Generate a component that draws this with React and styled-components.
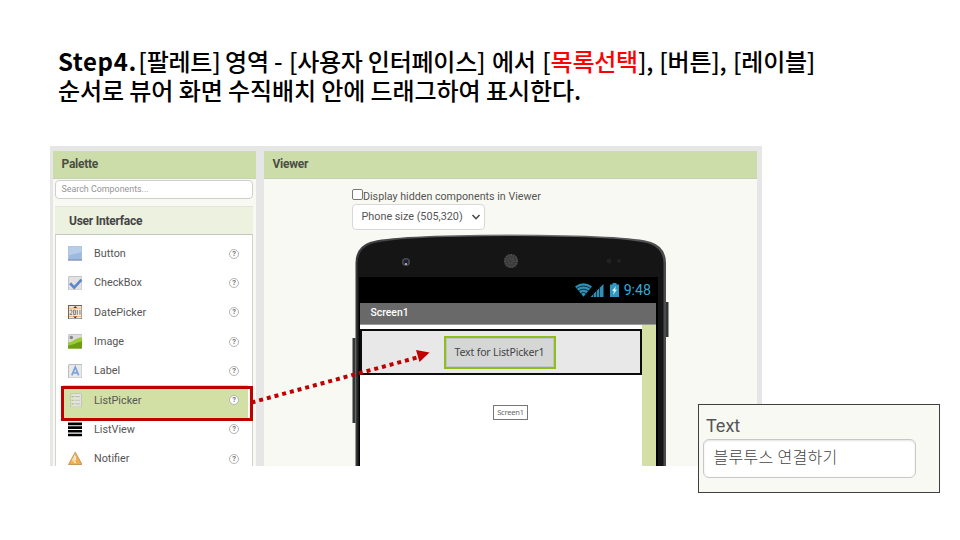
import React from "react";
import styled, { createGlobalStyle } from "styled-components";

const Global = createGlobalStyle`
  * { box-sizing: border-box; }
  body { margin: 0; background: #fff; font-family: Roboto, "Liberation Sans", sans-serif; }
`;

const Slide = styled.main`
  position: relative;
  width: 960px;
  height: 540px;
  overflow: hidden;
  background: #fff;
`;

const Heading = styled.h1`
  margin: 0;
  height: 146px;
  padding: 46px 0 0 58px;
  font: 500 24px/29px "Noto Sans CJK KR", sans-serif;
  color: #000;
  white-space: nowrap;
`;

const HeadLine = styled.div`
  height: 29px;
  letter-spacing: ${(p) => p.$spacing || 0}px;
`;

const Step = styled.b`
  font-weight: 700;
  letter-spacing: 0.6px;
`;

const Word = styled.span`
  margin-left: ${(p) => p.$shift || 0}px;
`;

const Accent = styled.span`
  color: #f00;
`;

const Designer = styled.section`
  display: flex;
  gap: 8px;
  width: 712px;
  height: 320px;
  margin-left: 50px;
  padding: 5px 5px 0 3px;
  background: #e6e6e6;
  overflow: hidden;
`;

const Panel = styled.div`
  width: ${(p) => p.$width}px;
  height: 315px;
  background: #f8f9f3;
  overflow: hidden;
`;

const PanelTitle = styled.div`
  height: 28px;
  padding-left: 8.5px;
  border-bottom: 1px solid #c9cebd;
  background: #cddda9;
  color: #4b4e45;
  font: 700 12px/27px Roboto, sans-serif;
  letter-spacing: -0.25px;
`;

const Search = styled.div`
  width: 198px;
  height: 19px;
  margin: 1px 0 0 2px;
  padding-left: 5.5px;
  border: 1px solid #cfcfcf;
  border-radius: 4px;
  background: #fff;
  color: #959595;
  font: 400 8.9px/17px Roboto, sans-serif;
`;

const Group = styled.div`
  width: 198px;
  height: 29px;
  margin: 7px 0 0 2px;
  padding-left: 14px;
  border-top: 1px solid #e4e6dc;
  border-bottom: 1px solid #c4c6c0;
  background: #edf1e0;
  color: #444;
  font: 700 12px/28px Roboto, sans-serif;
  letter-spacing: -0.25px;
`;

const List = styled.div`
  width: 198px;
  height: 240px;
  margin-left: 2px;
  padding-top: 4px;
  border: solid #d3d4d0;
  border-width: 0 1px;
  background: #fff;
`;

const Item = styled.div`
  display: flex;
  align-items: center;
  height: 29.3px;
  margin: 0 4px 0 7px;
  padding-left: 4.5px;
  background: ${(p) => (p.$active ? "#d2e0a6" : "transparent")};
  box-shadow: ${(p) => (p.$active ? "0 3px 0 #d2e0a6" : "none")};
  color: #555;
  font: 400 10.8px/29px Roboto, sans-serif;
`;

const ItemName = styled.span`
  flex: 1;
  margin-left: 12px;
`;

const Help = styled.span`
  width: 10px;
  height: 10px;
  margin-right: 9px;
  border: 1px solid #b4b4b4;
  border-radius: 50%;
  background: #fff;
  color: #777;
  font: 700 7.5px/8px Roboto, sans-serif;
  text-align: center;
`;

const Selection = styled.div`
  position: absolute;
  left: 61px;
  top: 386px;
  width: 192px;
  height: 35px;
  border: 3px solid #c00000;
`;

const Options = styled.div`
  padding-left: 88px;
  height: 55px;
  padding-top: 9px;
`;

const CheckRow = styled.div`
  display: flex;
  height: 15.5px;
  color: #555;
  font: 400 10.7px/17px Roboto, sans-serif;
  white-space: nowrap;
`;

const Box = styled.span`
  width: 11px;
  height: 11px;
  margin-top: 1px;
  border: 1px solid #777;
  border-radius: 2px;
  background: #fff;
`;

const SizeSelect = styled.div`
  display: flex;
  align-items: center;
  justify-content: space-between;
  width: 133px;
  height: 26px;
  padding: 0 3px 0 8.5px;
  border: 1px solid #d8d8d8;
  border-radius: 4px;
  background: #fff;
  color: #555;
  font: 400 10.8px/24px Roboto, sans-serif;
`;

const Phone = styled.div`
  position: relative;
  width: 316px;
  height: 232px;
  margin-left: 88px;
`;

const PhoneArt = styled.svg`
  position: absolute;
  left: 0;
  top: 0;
`;

const Display = styled.div`
  position: relative;
  width: 296px;
  margin-left: 8px;
  padding-top: 43px;
`;

const StatusBar = styled.div`
  display: flex;
  justify-content: flex-end;
  align-items: center;
  height: 26px;
  padding-right: 5px;
  color: #35a8d3;
  font: 400 14.2px/26px Roboto, sans-serif;
`;

const StatusIcons = styled.svg`
  margin-right: 4px;
`;

const AppTitle = styled.div`
  height: 22px;
  padding-left: 10.5px;
  border-bottom: 1px solid #9a9a9a;
  background: #696969;
  color: #fff;
  font: 500 10.4px/20px Roboto, sans-serif;
`;

const Canvas = styled.div`
  height: 142px;
  padding-top: 4px;
  border-right: 14px solid #d2e0a6;
  background: #fff;
`;

const Arrangement = styled.div`
  display: flex;
  justify-content: center;
  width: 282px;
  height: 46px;
  padding-top: 5px;
  padding-right: 3px;
  border: 2px solid #0b0b0b;
  background: #e8e8e8;
`;

const PickerButton = styled.div`
  width: 112px;
  height: 33px;
  border: 2px solid #8fbe1c;
  background: #d5d7d7;
  box-shadow: inset 0 0 0 1px #c2c4ca;
  color: #444;
  font: 400 10.6px/29px "Noto Sans", sans-serif;
  letter-spacing: -0.2px;
  text-align: center;
  white-space: nowrap;
`;

const ScreenTag = styled.div`
  width: 35px;
  height: 15px;
  margin: 30px 0 0 133px;
  border: 1px solid #777;
  background: #fff;
  color: #666;
  font: 400 7.5px/13px "Noto Sans", sans-serif;
  letter-spacing: -0.2px;
  text-align: center;
`;

const Arrow = styled.svg`
  position: absolute;
  left: 250px;
  top: 340px;
`;

const Property = styled.aside`
  position: absolute;
  left: 698px;
  top: 404px;
  width: 242px;
  height: 89px;
  padding: 9px 0 0 4px;
  border: 1px solid #3f3f3f;
  background: #f8f9f3;
`;

const PropertyLabel = styled.div`
  height: 25px;
  padding-left: 3px;
  color: #555;
  font: 400 18px/24px Roboto, sans-serif;
`;

const PropertyField = styled.div`
  width: 213px;
  height: 39px;
  padding-left: 9.5px;
  border: 1px solid #c8c8c8;
  border-radius: 6px;
  background: #fff;
  box-shadow: inset 0 1px 2px #e4e4e4;
  color: #444;
  font: 300 16px/33px "Noto Sans CJK KR", sans-serif;
  letter-spacing: 0.3px;
`;

const drawings = {
  Button: (
    <>
      <rect x=".5" y=".5" width="13" height="13" fill="#9eb9df" stroke="#b6c4da" />
      <path d="M1 1h12v5L1 9z" fill="#b8cdea" />
      <path d="M0 13.5h14" stroke="#7587a8" />
    </>
  ),
  CheckBox: (
    <>
      <rect x=".5" y=".5" width="13" height="13" rx="1" fill="#e2e2e2" stroke="#c5c5c5" />
      <path d="M2 7l4 4.2L13 3.5" fill="none" stroke="#5c88cb" strokeWidth="2.6" />
    </>
  ),
  DatePicker: (
    <>
      <rect x=".5" y=".5" width="13" height="13" fill="#f1e9df" stroke="#666" />
      <path d="M1 3.2h12M1 11.2h12" stroke="#f3b676" />
      <path d="M7 1l2 2H5zM7 13l2-2H5z" fill="#444" />
      <path d="M1.8 5h2v2l-2 2.2h2.3M5.4 5h1.8v4.2H5.4zM9 4.8v4.6M11.5 4.8v4.6" fill="none" stroke="#777" strokeWidth=".9" />
    </>
  ),
  Image: (
    <>
      <rect x=".5" y=".5" width="13" height="13" rx="1" fill="#dcdcdc" stroke="#c6c6c6" />
      <circle cx="3.2" cy="3.4" r="1.7" fill="#888" />
      <path d="M0 8c5 0 6-4 14-5v11H0z" fill="#9bcc38" />
      <path d="M0 11c6 0 8-3 14-4v7H0z" fill="#6d9e10" />
    </>
  ),
  Label: (
    <>
      <rect x=".5" y=".5" width="13" height="13" rx="1" fill="#e9e9e9" stroke="#bdbdbd" />
      <path d="M3.7 11L7 3l3.3 8M4.8 8.5h4.4" fill="none" stroke="#7fa4d8" strokeWidth="1.7" />
    </>
  ),
  ListPicker: (
    <>
      <rect x="2.5" y=".5" width="10.5" height="13" rx="1" fill="#e3e5dc" stroke="#c2c7b4" />
      <path d="M3.5 3.5h2M3.5 7h2M3.5 10.5h2" stroke="#9ebf5a" />
      <path d="M6.5 3.5h5M6.5 7h5M6.5 10.5h5" stroke="#bfc2b8" />
    </>
  ),
  ListView: <path d="M0 1.8h14M0 5.4h14M0 9h14M0 12.6h14" stroke="#000" strokeWidth="2.5" />,
  Notifier: (
    <>
      <path d="M7 1.2L13.4 13H.6z" fill="#efb14f" stroke="#c79a65" strokeLinejoin="round" />
      <path d="M7 2.2L3.5 9 7 12z" fill="#f8d89a" />
      <path d="M7 5v4M7 10.3v1.4" stroke="#fff" strokeWidth="1" />
    </>
  ),
};

const names = Object.keys(drawings);

export default function App() {
  return (
    <Slide>
      <Global />
      <Heading>
        <HeadLine $spacing={-0.25}>
          <Step>Step4.</Step>
          <Word $shift={1.5}>[팔레트]</Word> <Word $shift={-0.5}>영역</Word> <Word>-</Word>{" "}
          <Word $shift={1.5}>[사용자</Word> <Word>인터페이스]</Word>{" "}
          <Word $shift={1.5}>에서</Word> <Word $shift={1.5}>[</Word>
          <Accent>목록선택</Accent>],{" "}
          <Word $shift={1}>[버튼],</Word> <Word $shift={1.5}>[레이블]</Word>
        </HeadLine>
        <HeadLine $spacing={-0.08}>순서로 뷰어 화면 수직배치 안에 드래그하여 표시한다.</HeadLine>
      </Heading>
      <Designer>
        <Panel $width={203}>
          <PanelTitle>Palette</PanelTitle>
          <Search>Search Components...</Search>
          <Group>User Interface</Group>
          <List>
            {names.map((name) => (
              <Item key={name} $active={name === "ListPicker"}>
                <svg width="14.5" height="14.5" viewBox="0 0 14 14">{drawings[name]}</svg>
                <ItemName>{name}</ItemName>
                <Help>?</Help>
              </Item>
            ))}
          </List>
        </Panel>
        <Panel $width={493}>
          <PanelTitle>Viewer</PanelTitle>
          <Options>
            <CheckRow><Box />Display hidden components in Viewer</CheckRow>
            <SizeSelect>
              Phone size (505,320)
              <svg width="10" height="8" viewBox="0 0 10 8"><path d="M1.5 2L5 5.7 8.5 2" fill="none" stroke="#444" strokeWidth="1.5" /></svg>
            </SizeSelect>
          </Options>
          <Phone>
            <PhoneArt width="318" height="232" viewBox="0 0 318 232">
              <defs>
                <linearGradient id="edge" x1="0" x2="1">
                  <stop offset="0" stopColor="#38393a" />
                  <stop offset=".5" stopColor="#77797a" />
                  <stop offset="1" stopColor="#4b4b4e" />
                </linearGradient>
              </defs>
              <path d="M.5 104h3v85H.5zM313.5 68h3v35h-3z" fill="#333638" />
              <path d="M3.5 232V29Q3.5 13 18 8Q40 1 158 .5Q278 1 299 8Q314 13 314 29V232z" fill="url(#edge)" />
              <path d="M5.5 232V30Q5.5 15 19 10Q42 2.5 158 2Q276 2.5 298 10Q311.5 15 311.5 30V232z" fill="#151515" />
              <path d="M7 43h299v189H7z" fill="#000" />
              <circle cx="54" cy="28" r="4" fill="#4a4a4d" />
              <circle cx="54" cy="28" r="2.4" fill="#1c1c3c" />
              <circle cx="54" cy="30" r="1.1" fill="#b9b9cd" />
              <circle cx="159" cy="27" r="7" fill="#3b3b3b" />
              <circle cx="159" cy="27" r="6" fill="none" stroke="#505050" strokeWidth="2" strokeDasharray="1 1.5" />
              <circle cx="159" cy="27" r="2.5" fill="none" stroke="#505050" strokeWidth="2" strokeDasharray="1 1.5" />
              <circle cx="257" cy="27" r="2.5" fill="#222" />
              <circle cx="267" cy="27" r="2" fill="#222" />
            </PhoneArt>
            <Display>
              <StatusBar>
                <StatusIcons width="45" height="14" viewBox="0 0 45 14">
                  <path d="M0 3.5Q8.5-3 17 3.5L8.5 13.8z" fill="#308fb5" />
                  <path d="M1.3 5.5q7.2-5 14.4 0M3.3 8q5.2-3.6 10.4 0M5.5 10.5q3-2.2 6 0" fill="none" stroke="#04161d" strokeWidth=".8" />
                  <path d="M15.5 14L28.5 1v13z" fill="#308fb5" />
                  <path d="M18.5 8v6M21.5 5v9M24.5 3v11" stroke="#04161d" strokeWidth=".7" />
                  <path d="M35 1.5h2.5V0h4v1.500H44V14H35z" fill="#2f97c1" />
                  <path d="M41 3l-4 5h2l-1 4 4-5.500h-2z" fill="#dcf5ff" />
                </StatusIcons>
                9:48
              </StatusBar>
              <AppTitle>Screen1</AppTitle>
              <Canvas>
                <Arrangement><PickerButton>Text for ListPicker1</PickerButton></Arrangement>
                <ScreenTag>Screen1</ScreenTag>
              </Canvas>
            </Display>
          </Phone>
        </Panel>
      </Designer>
      <Selection />
      <Arrow width="190" height="70" viewBox="0 0 190 70">
        <path d="M1.5 62.5L169 17" stroke="#c00000" strokeWidth="4" strokeDasharray="4 3.950" />
        <path d="M166 10L179.5 12.5L169.5 22z" fill="#c00000" />
      </Arrow>
      <Property>
        <PropertyLabel>Text</PropertyLabel>
        <PropertyField>블루투스 연결하기</PropertyField>
      </Property>
    </Slide>
  );
}
